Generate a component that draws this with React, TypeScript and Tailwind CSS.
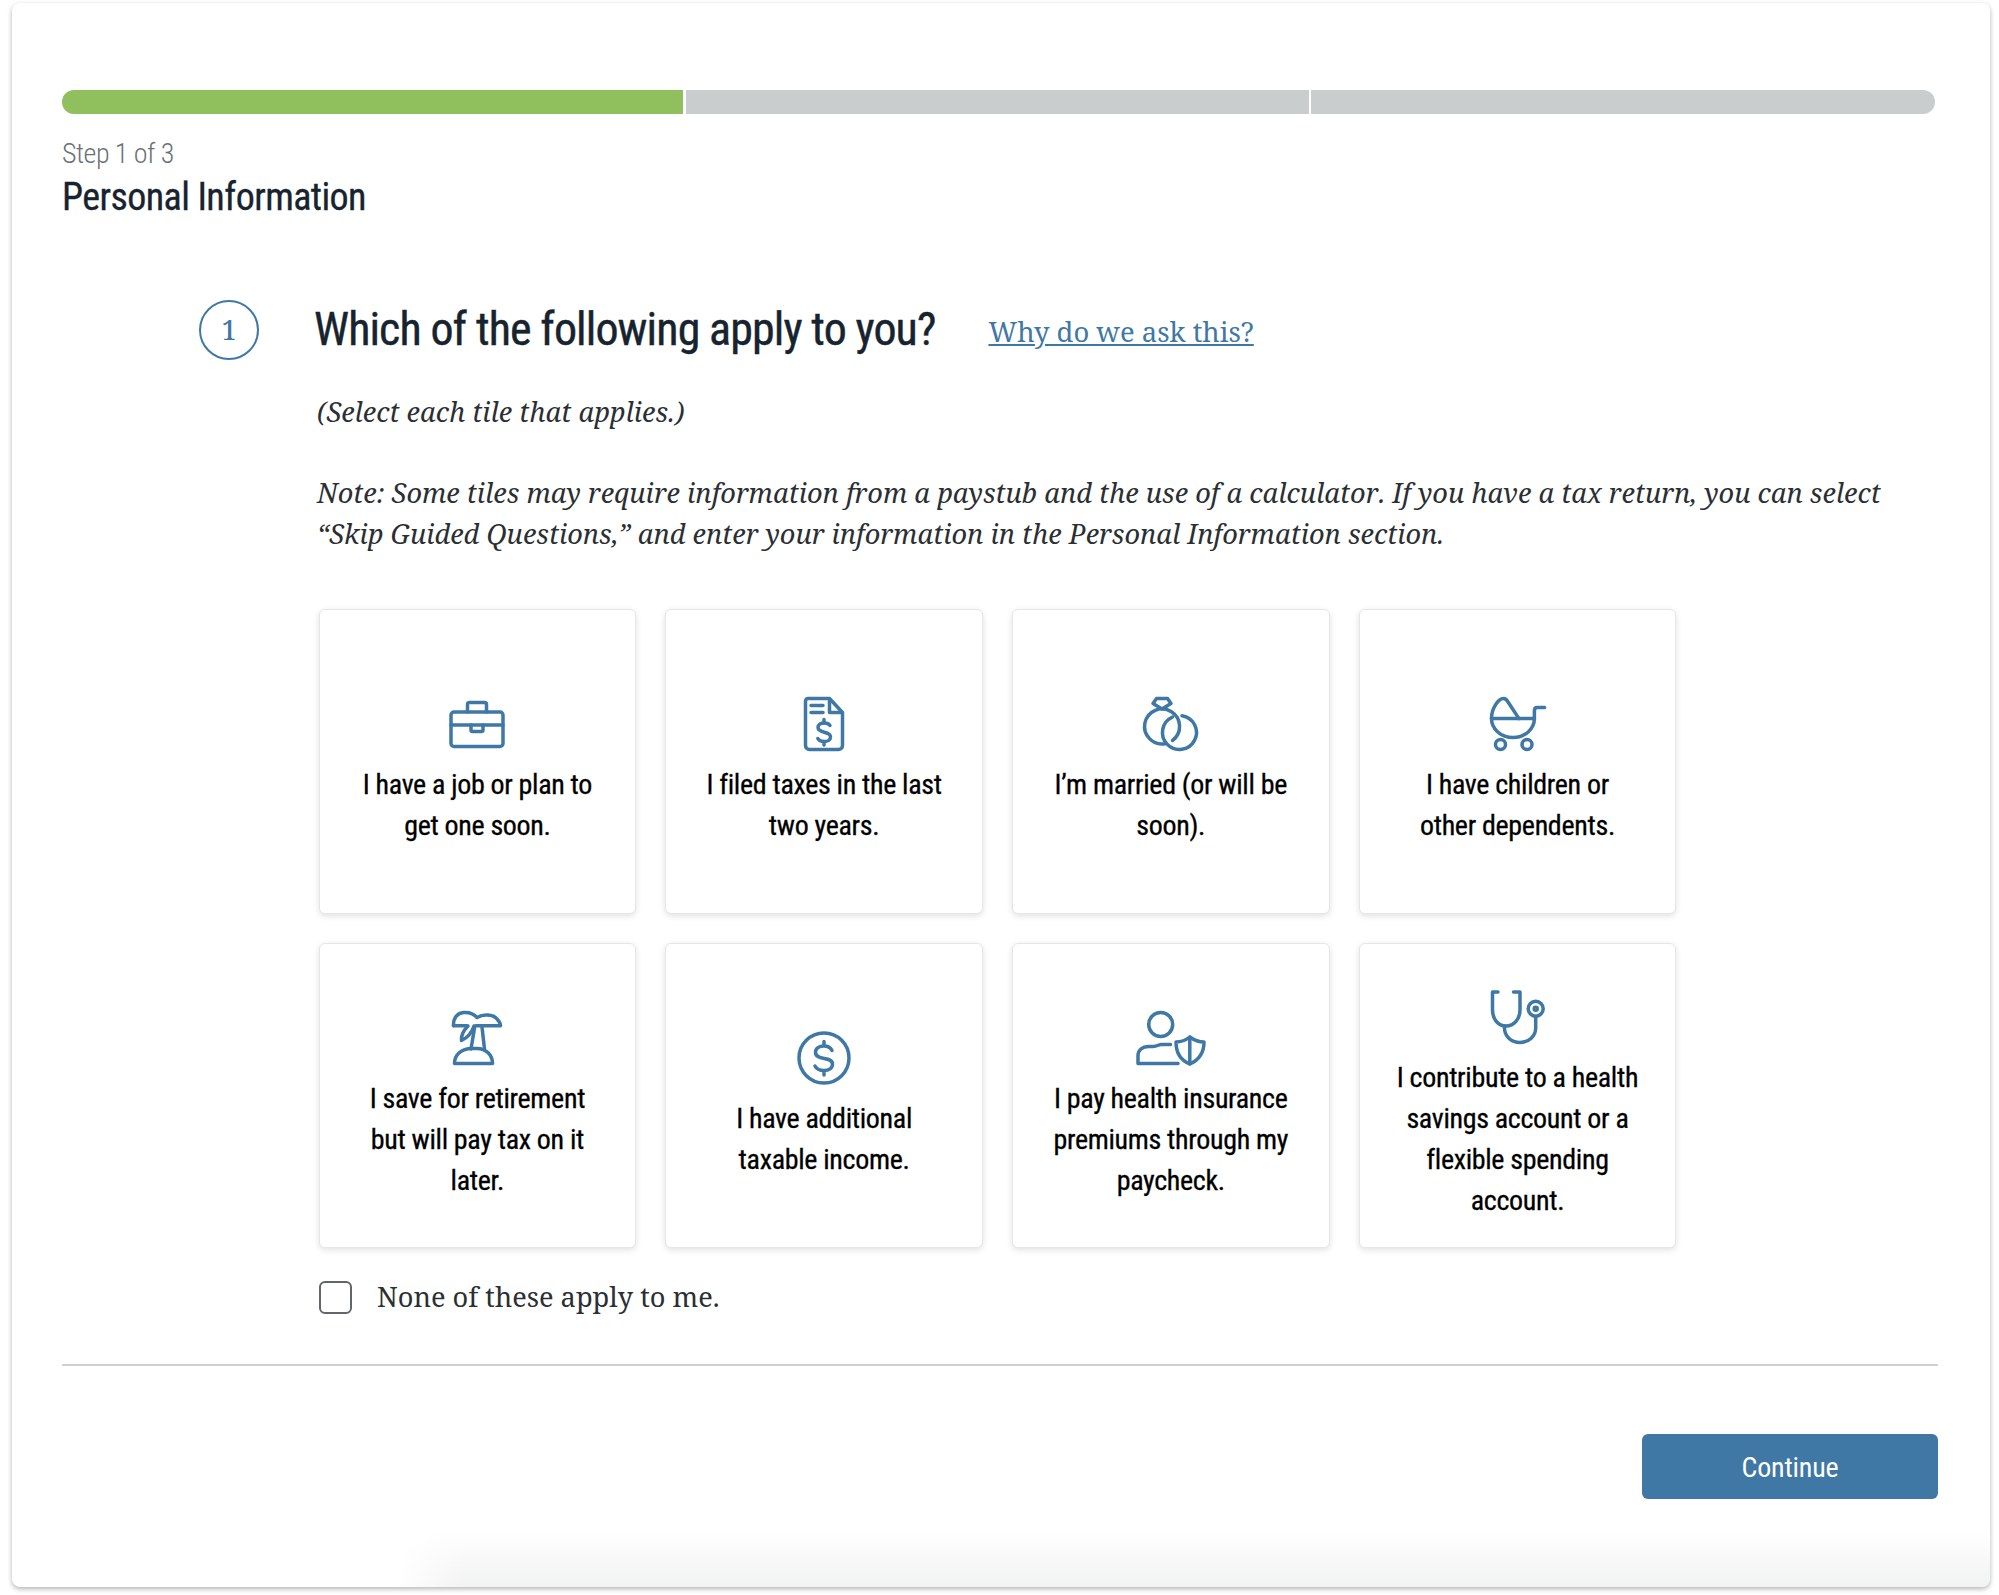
import React from "react";

const sans = "font-['Liberation_Sans_Narrow','Roboto_Condensed','Liberation_Sans',sans-serif]";
const serif = "font-['Noto_Serif','Liberation_Serif',serif]";

const Svg = ({ w = 60, children }: { w?: number; children: React.ReactNode }) => (
  <svg width={w} height={54} viewBox={`0 0 ${w} 54`} fill="none" stroke="#3f78a5" strokeWidth={3.5} strokeLinecap="round" strokeLinejoin="round" className="block overflow-visible">
    {children}
  </svg>
);

const Briefcase = () => (
  <Svg>
    <rect x="4" y="15" width="52" height="34.5" rx="3" />
    <path d="M20.5 15V7.5a2 2 0 0 1 2-2h15a2 2 0 0 1 2 2V15" />
    <path d="M4 28H56" />
    <path d="M24 28V33a1.5 1.5 0 0 0 1.5 1.5h9A1.5 1.5 0 0 0 36 33V28" />
  </Svg>
);
const Doc = () => (
  <Svg>
    <path d="M14 1.5H35.5L48.5 15.5V48.5a4 4 0 0 1-4 4H15.5a4 4 0 0 1-4-4V4a2.5 2.5 0 0 1 2.5-2.5Z" />
    <path d="M35.5 2V15.5H48" />
    <path d="M17 8.5H29M17 15.5H29" />
    <path d="M36 28.5c-1-1.8-3-2.5-5.8-2.5-3.5 0-6.2 1.6-6.2 4.6 0 6.3 12.5 3 12.5 9.3 0 3-2.8 4.6-6.3 4.6-3 0-5.3-1-6.4-3M30 22.5v3.5M30 44.5v3.5" />
  </Svg>
);
const Rings = () => (
  <Svg>
    <path d="M31.5 43.5A17.5 17.5 0 1 0 24 46.7" />
    <path d="M41 18.7A17 17 0 1 1 31.5 20" />
    <path d="M15.5 1.5H26.5L30 6.5L21 12L12 6.5Z" />
  </Svg>
);
const Stroller = () => (
  <Svg>
    <path d="M4.5 21.6C4.5 12 11 1.5 16.6 1.5C18.5 1.5 20 3 21 5L32 21.6" />
    <path d="M4.5 21.6H47.4" />
    <path d="M4.5 21.6C4.5 32 14 40.6 26 40.6C38 40.6 47.4 32 47.4 21.6V14Q47.4 10.6 50 10.6H57.6" />
    <circle cx="13.5" cy="47.5" r="5" />
    <circle cx="40" cy="47.5" r="5" />
  </Svg>
);
const Palm = () => (
  <Svg>
    <path d="M6.5 14.7C6 7 10.5 2 16.5 1.5C22 1 27 3 30 6.5C36 3 46 3 50 8C52 10 53.5 12.5 53.5 14.7H29" />
    <path d="M6.5 14.7H20" />
    <path d="M21 15C17 19 14 24 14.5 29.5C20 27 25 21 27 15" />
    <path d="M27.5 17L24 38M35 16L37.5 38" />
    <path d="M7.5 52.5C7.5 44 14 37.5 25 37.5H30C39 37.5 45.5 44 45.5 52.5Z" />
  </Svg>
);
const Coin = () => (
  <Svg>
    <circle cx="30" cy="27" r="25" />
    <path d="M38 19.5C36.5 16.5 33.5 15 30 15C25 15 21.5 17.5 21.5 21.5C21.5 30 38.5 25 38.5 33C38.5 37 35 39.5 30 39.5C26 39.5 22.5 38 21 35M30 10.5V15M30 39.5V44" />
  </Svg>
);
const PersonShield = () => (
  <Svg w={70}>
    <circle cx="24.7" cy="13.5" r="12" />
    <path d="M34.5 33.5H25C23 33.5 21 35.5 17 35.5H13C6 35.5 2 39 2 45V52.5H42" />
    <path d="M53.8 26C50 29 45 31 40 31C40 42 44 49 53.8 53C63 49 68 42 68 31C63 31 58 29 53.8 26Z" />
    <path d="M53.8 26V53" />
  </Svg>
);
const Stethoscope = () => (
  <Svg>
    <path d="M11 2H5.5V20C5.5 29 11 36 19 36C27 36 33 29 33 20V2H26.5" />
    <path d="M17.5 36V38C17.5 46 24 52.5 33 52.5C42 52.5 48.7 46 48.7 38V26.5" />
    <circle cx="48.7" cy="18.7" r="7.5" />
    <circle cx="48.7" cy="18.7" r="1.5" />
  </Svg>
);

const tiles: { icon: React.ReactNode; text: string[] }[] = [
  { icon: <Briefcase />, text: ["I have a job or plan to", "get one soon."] },
  { icon: <Doc />, text: ["I filed taxes in the last", "two years."] },
  { icon: <Rings />, text: ["I’m married (or will be", "soon)."] },
  { icon: <Stroller />, text: ["I have children or", "other dependents."] },
  { icon: <Palm />, text: ["I save for retirement", "but will pay tax on it", "later."] },
  { icon: <Coin />, text: ["I have additional", "taxable income."] },
  { icon: <PersonShield />, text: ["I pay health insurance", "premiums through my", "paycheck."] },
  { icon: <Stethoscope />, text: ["I contribute to a health", "savings account or a", "flexible spending", "account."] },
];

export default function App() {
  return (
    <div className="w-[1999px] h-[1595px] bg-white pt-[3px] pl-[12px] overflow-hidden">
      <div className="relative w-[1978px] h-[1584px] rounded-lg bg-white shadow-[0_2px_5px_rgba(0,0,0,0.3)] pt-[87px] pl-[50px] pr-[52px]">
        <div className="flex h-[24px] w-[1873px]">
          <div className="w-[621px] rounded-l-full bg-[#90c05d]" />
          <div className="ml-[3px] w-[623px] bg-[#cacdcd]" />
          <div className="ml-[2px] w-[624px] rounded-r-[12px] bg-[#cacdcd]" />
        </div>
        <div className={`mt-[20px] text-[28px] font-light leading-[40px] tracking-[-0.5px] text-[#6a7177] ${sans}`}>Step 1 of 3</div>
        <div className={`text-[38px] leading-[46px] tracking-[-0.58px] text-[#17232e] font-normal [-webkit-text-stroke:0.3px_#17232e] ${sans}`}>Personal Information</div>

        <div className="mt-[80px] ml-[137px] flex h-[60px] items-center">
          <div className={`flex h-[60px] w-[60px] shrink-0 items-center justify-center rounded-full border-2 border-[#3f78a5] text-[27px] font-medium text-[#3f78a5] ${serif}`}>1</div>
          <h1 className={`ml-[55px] pb-[2px] text-[46px] leading-[60px] tracking-[-0.9px] text-[#17232e] [-webkit-text-stroke:0.4px_#17232e] ${sans}`}>Which of the following apply to you?</h1>
          <a className={`ml-[53px] mt-[4px] text-[27.4px] text-[#3f78a5] underline ${serif}`}>Why do we ask this?</a>
        </div>

        <div className={`ml-[255px] mt-[31px] text-[27.2px] leading-[41px] italic text-[#2b2f33] [font-kerning:none] ${serif}`}>(Select each tile that applies.)</div>
        <div className={`ml-[255px] mt-[40px] text-[27.2px] leading-[41px] italic text-[#2b2f33] [font-kerning:none] ${serif}`}>
          <div className="whitespace-nowrap">Note: Some tiles may require information from a paystub and the use of a calculator. If you have a tax return, you can select</div>
          <div className="whitespace-nowrap">“Skip Guided Questions,” and enter your information in the Personal Information section.</div>
        </div>

        <div className="ml-[256.5px] mt-[55px] grid grid-cols-[repeat(4,317.8px)] auto-rows-[305px] gap-x-[28.9px] gap-y-[29px]">
          {tiles.map((t) => (
            <div key={t.text[0]} className="flex flex-col items-center justify-center rounded-md border border-[#e4e6e8] bg-white pt-[20px] shadow-[0_2px_6px_rgba(0,0,0,0.12)]">
              <div className="h-[54px] mb-[13px]">{t.icon}</div>
              <div className={`text-center text-[28px] leading-[41px] tracking-[-0.32px] text-black [-webkit-text-stroke:0.3px_#000] ${sans}`}>
                {t.text.map((l) => (
                  <div key={l} className="whitespace-nowrap">{l}</div>
                ))}
              </div>
            </div>
          ))}
        </div>

        <div className="ml-[257px] mt-[33px] flex h-[33px] items-center">
          <div className="h-[33px] w-[33px] rounded-md border-2 border-[#62666a] bg-white" />
          <span className={`ml-[25px] text-[27.2px] text-[#2b2f33] ${serif}`}>None of these apply to me.</span>
        </div>

        <div className="mt-[50px] h-[2px] bg-[#cfd0d1]" />

        <div className="mt-[68px] flex justify-end">
          <button className={`h-[65px] w-[296px] rounded-md bg-[#3f78a5] pt-[2px] text-[28px] tracking-[-0.2px] text-white ${sans}`}>Continue</button>
        </div>

        <div className="pointer-events-none absolute bottom-0 left-[385px] right-0 h-[57px] rounded-br-lg bg-gradient-to-b from-transparent to-[#f1f2f2] [mask-image:linear-gradient(to_right,transparent,black_70px)]" />
      </div>
    </div>
  );
}
